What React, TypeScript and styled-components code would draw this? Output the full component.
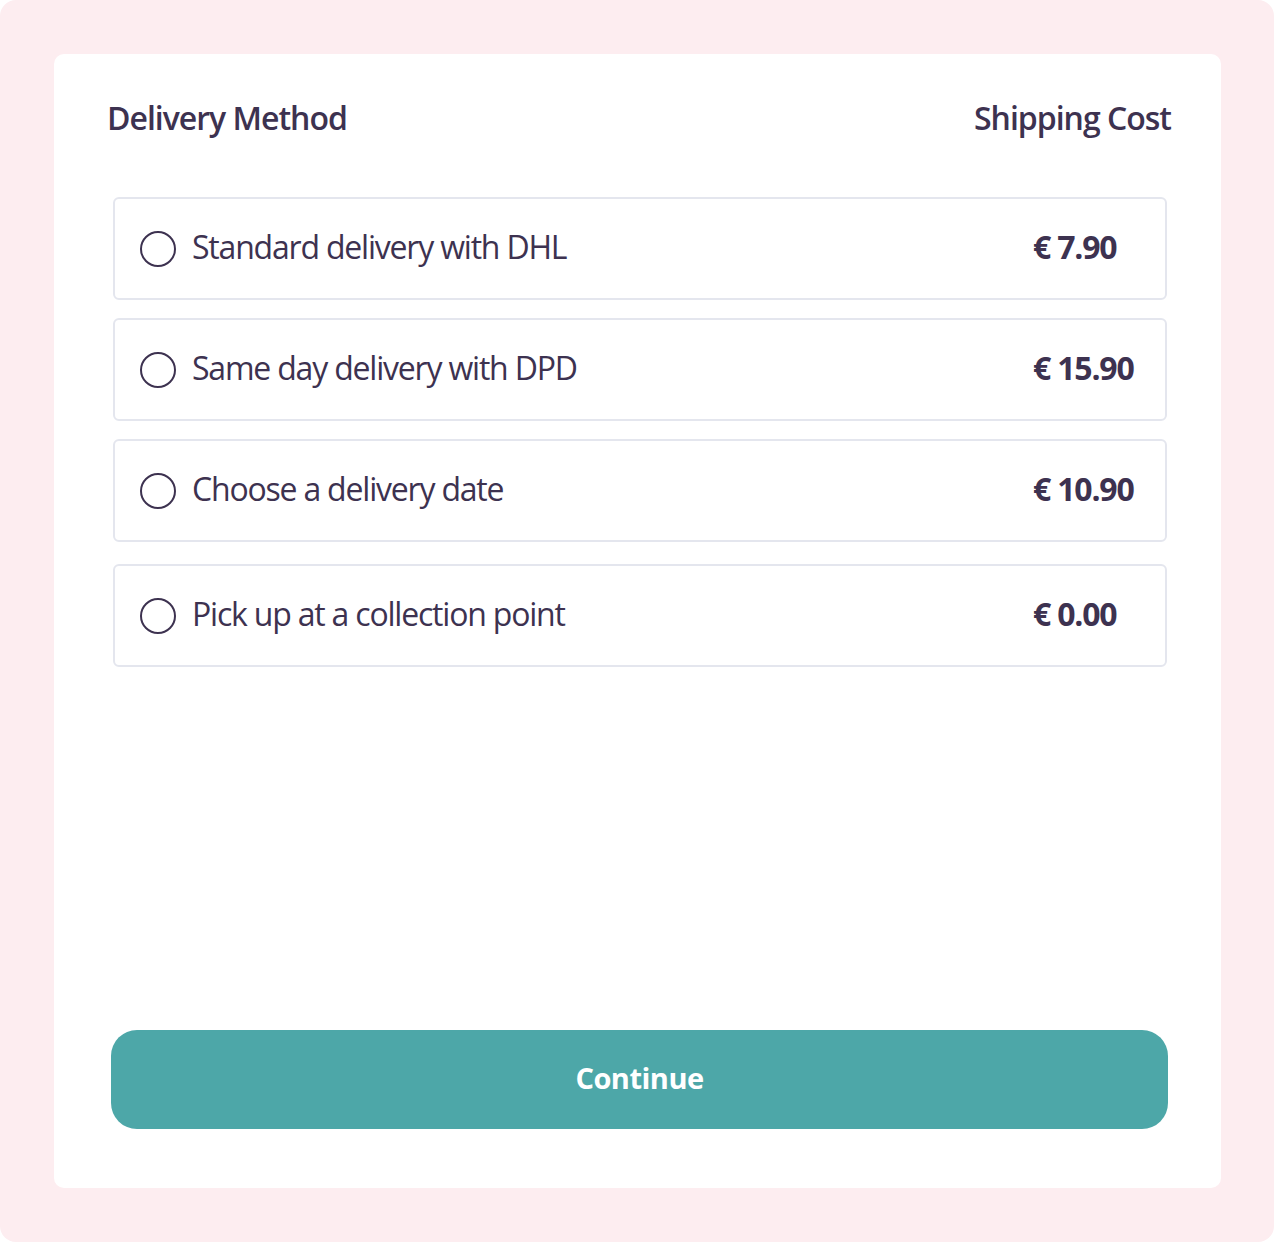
import styled, { createGlobalStyle } from 'styled-components';

const GlobalStyle = createGlobalStyle`
  html, body {
    margin: 0;
    padding: 0;
    background: #ffffff;
  }
  body {
    font-family: "Open Sans", "Noto Sans", sans-serif;
    color: #3d3250;
  }
  * {
    box-sizing: border-box;
  }
`;

const Page = styled.div`
  width: 1274px;
  height: 1242px;
  background: #fdedf0;
  border-radius: 16px;
  padding: 54px 53px 54px 54px;
`;

const Card = styled.div`
  height: 100%;
  background: #ffffff;
  border-radius: 10px;
  padding: 42px 50px 59px 53px;
  display: flex;
  flex-direction: column;
`;

const Header = styled.div`
  display: flex;
  justify-content: space-between;
  align-items: center;
  margin-bottom: 57px;
`;

const HeaderLabel = styled.h2`
  margin: 0;
  font-size: 32px;
  font-weight: 600;
  letter-spacing: -1px;
  line-height: 44px;
`;

const OptionList = styled.div`
  display: flex;
  flex-direction: column;
  gap: 18px;
  margin: 0 4px 0 6px;
`;

const Option = styled.label`
  display: flex;
  align-items: center;
  height: 103px;
  padding: 0 0 4px 25px;
  border: 2px solid #e4e6ee;
  border-radius: 6px;
  cursor: pointer;

  &:last-child {
    margin-top: 4px;
  }
`;

const Radio = styled.span`
  width: 36px;
  height: 36px;
  margin: 4px 16px 0 0;
  border-radius: 50%;
  border: 2px solid #3d3250;
  flex-shrink: 0;
`;

const OptionName = styled.span`
  flex: 1;
  font-size: 32px;
  font-weight: 400;
  letter-spacing: -1.2px;
`;

const Price = styled.span`
  width: 132px;
  font-size: 32px;
  font-weight: 700;
  letter-spacing: -1.2px;
`;

const Spacer = styled.div`
  flex: 1;
`;

const ContinueButton = styled.button`
  height: 99px;
  margin: 0 3px 0 4px;
  padding: 0 0 5px;
  border: none;
  border-radius: 26px;
  background: #4da7a8;
  color: #ffffff;
  font-family: "Open Sans", "Noto Sans", sans-serif;
  font-size: 29px;
  font-weight: 700;
  letter-spacing: -0.5px;
  cursor: pointer;
`;

const options = [
  { name: 'Standard delivery with DHL', price: '€ 7.90' },
  { name: 'Same day delivery with DPD', price: '€ 15.90' },
  { name: 'Choose a delivery date', price: '€ 10.90' },
  { name: 'Pick up at a collection point', price: '€ 0.00' },
];

export default function App() {
  return (
    <>
      <GlobalStyle />
      <Page>
        <Card>
          <Header>
            <HeaderLabel>Delivery Method</HeaderLabel>
            <HeaderLabel>Shipping Cost</HeaderLabel>
          </Header>
          <OptionList>
            {options.map((o) => (
              <Option key={o.name}>
                <Radio />
                <OptionName>{o.name}</OptionName>
                <Price>{o.price}</Price>
              </Option>
            ))}
          </OptionList>
          <Spacer />
          <ContinueButton>Continue</ContinueButton>
        </Card>
      </Page>
    </>
  );
}
